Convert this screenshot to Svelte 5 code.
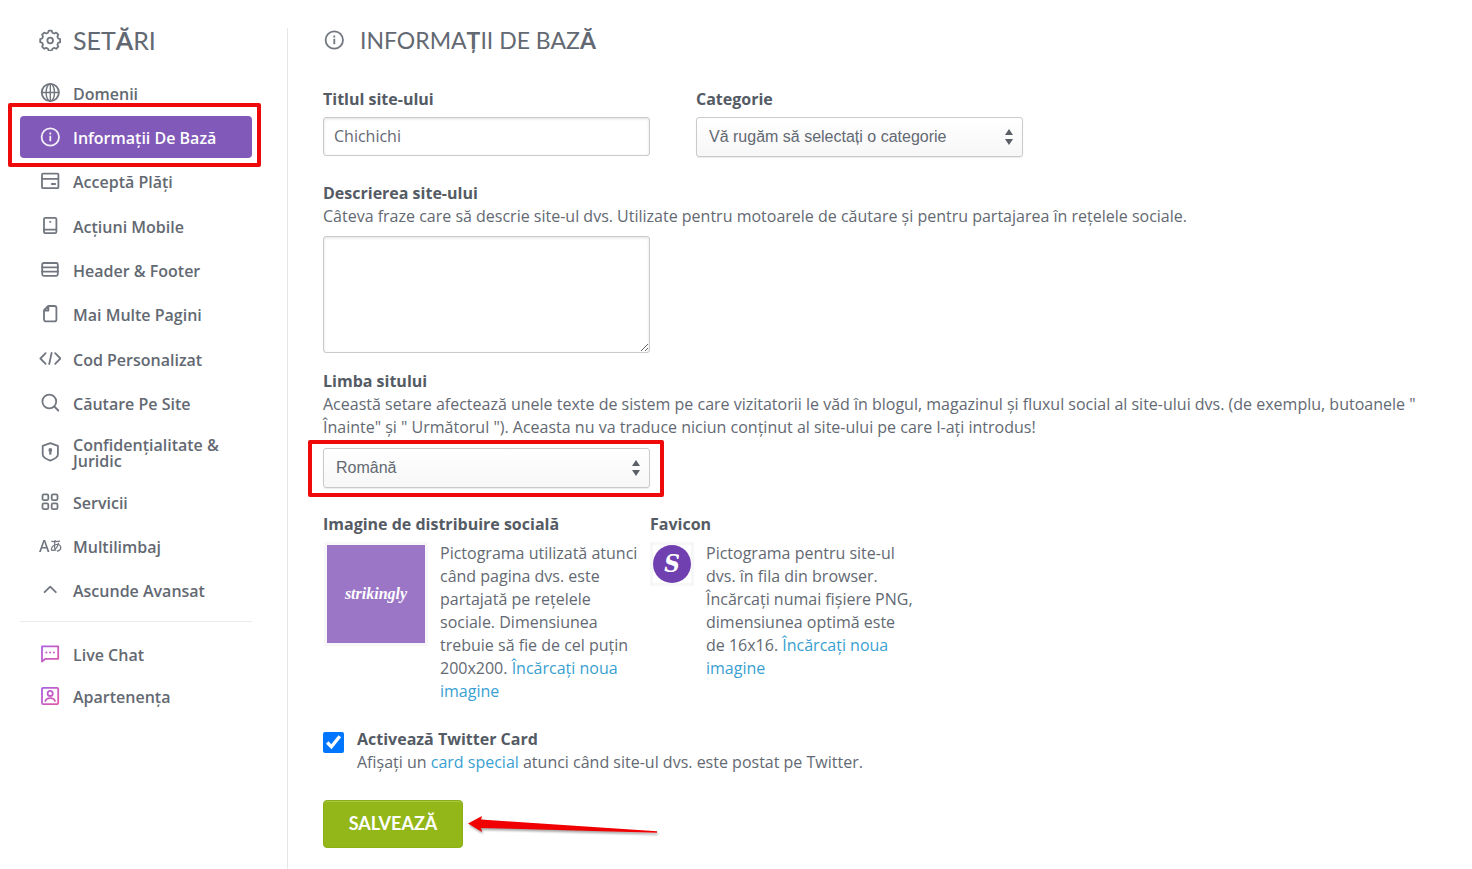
<script lang="ts">
  interface NavItem {
    icon: string;
    label: string;
    active?: boolean;
  }

  const settings: NavItem[] = [
    { icon: "globe", label: "Domenii" },
    { icon: "info", label: "Informații De Bază", active: true },
    { icon: "card", label: "Acceptă Plăți" },
    { icon: "mobile", label: "Acțiuni Mobile" },
    { icon: "rows", label: "Header & Footer" },
    { icon: "page", label: "Mai Multe Pagini" },
    { icon: "code", label: "Cod Personalizat" },
    { icon: "search", label: "Căutare Pe Site" },
    { icon: "shield", label: "Confidențialitate & Juridic" },
    { icon: "grid", label: "Servicii" },
    { icon: "lang", label: "Multilimbaj" },
    { icon: "up", label: "Ascunde Avansat" },
  ];

  const extras: NavItem[] = [
    { icon: "chat", label: "Live Chat" },
    { icon: "member", label: "Apartenența" },
  ];

  let title = $state("Chichichi");
  let description = $state("");
  let twitterCard = $state(true);
</script>

{#snippet icon(name: string)}
  {#if name === "lang"}
    <span class="icon icon--text" aria-hidden="true">A<span class="icon__kana">あ</span></span>
  {:else}
    <svg class="icon" viewBox="0 0 22 22" aria-hidden="true">
      {#if name === "gear"}
        <path d="M9.500 1.900h3l.7 2 1.800.8 2-.9 2.100 2.100-.9 2 .8 1.800 2 .7v3l-2 .7-.8 1.800.9 2-2.100 2.100-2-.9-1.800.8-.7 2h-3l-.7-2-1.800-.8-2 .9-2.100-2.100.9-2-.8-1.800-2-.7v-3l2-.7.8-1.800-.9-2L5 3.800l2 .9 1.800-.8z" transform="translate(.2 -.2)" />
        <circle cx="11.200" cy="11.500" r="2.800" />
      {:else if name === "globe"}
        <circle cx="11.300" cy="10.500" r="8.600" />
        <ellipse cx="11.300" cy="10.500" rx="4.200" ry="8.600" stroke-width="1.400" />
        <path d="M11.300 2v17M2.700 10.500h17.200" stroke-width="1.400" />
      {:else if name === "info"}
        <circle cx="11.300" cy="11" r="8.700" />
        <path d="M11.300 9.800v5.400M11.300 6.400v2" stroke-linecap="butt" />
      {:else if name === "card"}
        <rect x="3" y="3.600" width="16.400" height="14.600" rx="1" />
        <path d="M3.200 8.800h16M12.800 14h3.400" />
      {:else if name === "mobile"}
        <rect x="5" y="2.800" width="12.400" height="15.400" rx="1.500" />
        <path d="M5 14.600h12M11 6.800h.4" />
      {:else if name === "rows"}
        <rect x="3.200" y="4" width="15.600" height="12.800" rx="1.500" />
        <path d="M3 8.300h16M3 12.600h16" />
      {:else if name === "page"}
        <path d="M9.200 3h6.200a2 2 0 0 1 2 2v11.400a2 2 0 0 1-2 2H7a2 2 0 0 1-2-2V7.200zM9.400 3v4.500H5" />
      {:else if name === "code"}
        <path d="M6.600 5.200 1.400 10.500l5.200 5.300M16.200 5.200l5.200 5.300-5.200 5.300M12.600 5l-2.400 11" />
      {:else if name === "search"}
        <circle cx="10.300" cy="9.500" r="6.900" />
        <path d="m15.300 14.500 4 4" />
      {:else if name === "shield"}
        <path d="M11.300 2.200 18.900 4.800v8.800c0 2.400-3.200 4.500-7.600 6-4.400-1.500-7.600-3.600-7.600-6V4.800z" />
        <circle cx="11.300" cy="9" r="1.900" fill="currentColor" stroke="none" />
        <path d="M11.300 9v4.600" stroke-width="2.200" stroke-linecap="butt" />
      {:else if name === "grid"}
        <rect x="3.500" y="3.300" width="5.800" height="5.800" rx="1.400" />
        <rect x="12.700" y="3.300" width="5.800" height="5.800" rx="1.400" />
        <rect x="3.500" y="12.300" width="5.800" height="5.800" rx="1.400" />
        <rect x="12.700" y="12.300" width="5.800" height="5.800" rx="1.400" />
      {:else if name === "up"}
        <path d="m5.600 13.200 5.600-5.600 5.600 5.600" />
      {:else if name === "chat"}
        <path d="M3 3.400h16.200v12.400H6.400L3 18.600z" stroke="url(#pink)" />
        <path d="M7.300 9.500h.1M11.100 9.500h.1M14.900 9.500h.1" stroke="#c04fc4" stroke-width="2" />
      {:else if name === "member"}
        <rect x="3" y="2.900" width="16.200" height="16.200" rx="1" stroke="url(#pink)" />
        <circle cx="11.200" cy="8.400" r="2.600" stroke="url(#pink)" />
        <path d="M6.400 16c1-3.800 8.600-3.800 9.600 0" stroke="url(#pink)" />
      {/if}
    </svg>
  {/if}
{/snippet}

{#snippet arrows()}
  <svg class="select__arrows" viewBox="0 0 8 16" aria-hidden="true">
    <path d="M4 0l4 6H0zM4 16l4-6H0z" />
  </svg>
{/snippet}

{#snippet navItem(item: NavItem)}
  <li class="nav__row">
    <a class="nav__link" class:nav__link--active={item.active} href="#{item.icon}">
      {@render icon(item.icon)}
      <span class="nav__label">{item.label}</span>
    </a>
    {#if item.active}
      <span class="marker marker--nav"></span>
    {/if}
  </li>
{/snippet}

<svg class="defs" aria-hidden="true">
  <linearGradient id="pink" gradientUnits="userSpaceOnUse" x1="2" y1="3" x2="20" y2="19">
    <stop offset="0" stop-color="#a04fe0" />
    <stop offset="1" stop-color="#e0489f" />
  </linearGradient>
</svg>

<div class="page">
  <aside class="sidebar">
    <h2 class="heading heading--side">
      {@render icon("gear")}
      <span>SET<b>Ă</b>RI</span>
    </h2>
    <nav>
      <ul class="nav">
        {#each settings as item (item.icon)}
          {@render navItem(item)}
        {/each}
      </ul>
      <ul class="nav nav--extras">
        {#each extras as item (item.icon)}
          {@render navItem(item)}
        {/each}
      </ul>
    </nav>
  </aside>

  <main class="content">
    <h1 class="heading">
      {@render icon("info")}
      <span>INFORMA<b>Ț</b>II DE BAZ<b>Ă</b></span>
    </h1>

    <form class="form">
      <div class="columns columns--spaced">
        <div class="field">
          <label class="label label--gap" for="title">Titlul site-ului</label>
          <input class="input" id="title" type="text" bind:value={title} />
        </div>
        <div class="field">
          <label class="label label--gap" for="category">Categorie</label>
          <div class="select">
            <select id="category">
              <option>Vă rugăm să selectați o categorie</option>
            </select>
            {@render arrows()}
          </div>
        </div>
      </div>

      <div class="block block--description">
        <label class="label" for="description">Descrierea site-ului</label>
        <p class="text">
          Câteva fraze care să descrie site-ul dvs. Utilizate pentru motoarele de căutare și pentru partajarea în rețelele sociale.
        </p>
        <textarea class="input input--area" id="description" bind:value={description}></textarea>
      </div>

      <div class="block block--language">
        <label class="label" for="language">Limba sitului</label>
        <p class="text">
          Această setare afectează unele texte de sistem pe care vizitatorii le văd în blogul, magazinul și fluxul social al site-ului dvs. (de exemplu, butoanele " Înainte" și " Următorul "). Aceasta nu va traduce niciun conținut al site-ului pe care l-ați introdus!
        </p>
        <div class="select">
          <select id="language">
            <option>Română</option>
          </select>
          {@render arrows()}
          <span class="marker marker--select"></span>
        </div>
      </div>

      <div class="columns block--images">
        <section class="field">
          <h3 class="label label--gap">Imagine de distribuire socială</h3>
          <div class="upload">
            <div class="thumb thumb--share"><span>strikingly</span></div>
            <p class="text">
              Pictograma utilizată atunci când pagina dvs. este partajată pe rețelele sociale. Dimensiunea trebuie să fie de cel puțin 200x200. <a href="#share">Încărcați noua imagine</a>
            </p>
          </div>
        </section>
        <section class="field field--favicon">
          <h3 class="label label--gap">Favicon</h3>
          <div class="upload">
            <div class="thumb thumb--favicon"><span>S</span></div>
            <p class="text">
              Pictograma pentru site-ul dvs. în fila din browser. Încărcați numai fișiere PNG, dimensiunea optimă este de 16x16. <a href="#favicon">Încărcați noua imagine</a>
            </p>
          </div>
        </section>
      </div>

      <div class="check">
        <input class="check__box" id="twitter" type="checkbox" bind:checked={twitterCard} />
        <div>
          <label class="label" for="twitter">Activează Twitter Card</label>
          <p class="text">
            Afișați un <a href="#card">card special</a> atunci când site-ul dvs. este postat pe Twitter.
          </p>
        </div>
      </div>

      <div class="actions">
        <button class="save" type="button">SALVEAZĂ</button>
        <svg class="pointer" viewBox="0 0 190 20" aria-hidden="true">
          <path d="M0 9.500 14 2l-1 3.500L189 17.200v1.600L13 14l1 4z" />
        </svg>
      </div>
    </form>
  </main>
</div>

<style>
  :global(body) {
    margin: 0;
    background: #fff;
    color: #636972;
    font: 16px/23px "Open Sans", sans-serif;
  }

  .defs {
    position: absolute;
    width: 0;
    height: 0;
  }

  .page {
    display: flex;
    min-height: 100vh;
    box-sizing: border-box;
    padding-top: 28px;
  }

  .sidebar {
    flex: none;
    box-sizing: border-box;
    width: 288px;
    padding: 0 35px 0 20px;
    border-right: 1px solid #e5e6e8;
  }

  .content {
    flex: 1;
    min-width: 0;
    padding: 0 24px 21px 35px;
  }

  .heading {
    display: flex;
    align-items: center;
    gap: 15px;
    margin: 0 0 36px;
    color: #636972;
    font: 400 23px/24px Lato, sans-serif;
  }

  .heading--side {
    gap: 12px;
    margin-bottom: 20px;
    padding-left: 19px;
    font-size: 25px;
  }

  .icon {
    flex: none;
    width: 22px;
    height: 22px;
    fill: none;
    stroke: currentColor;
    stroke-width: 1.8;
    stroke-linecap: round;
    stroke-linejoin: round;
    opacity: 0.9;
  }

  .icon--text {
    display: flex;
    align-items: center;
    font: 500 16px/22px "Noto Sans", sans-serif;
  }

  .icon__kana {
    align-self: flex-start;
    font: 500 13px/20px "Noto Sans CJK JP", sans-serif;
  }

  .nav {
    margin: 0;
    padding: 0;
    list-style: none;
  }

  .nav--extras {
    margin-top: 10px;
    padding-top: 11px;
    border-top: 1px solid #e9eaec;
  }

  .nav__row {
    position: relative;
    margin-bottom: 2px;
  }

  .nav__row:nth-child(3n) {
    margin-bottom: 3px;
  }

  .nav--extras .nav__row {
    margin-bottom: 0;
  }

  .nav__link {
    display: flex;
    align-items: center;
    gap: 12px;
    box-sizing: border-box;
    min-height: 42px;
    padding: 9px 19px;
    border-radius: 4px;
    color: #636972;
    font-weight: 600;
    line-height: 16px;
    text-decoration: none;
  }

  .nav__link--active {
    background: #8159b8;
    color: #fff;
  }

  .nav__label {
    padding-top: 2px;
  }

  .marker {
    position: absolute;
    border: 4px solid #ee0a0a;
    border-radius: 2px;
    pointer-events: none;
  }

  .marker--nav {
    inset: -13px -9px -9px -12px;
  }

  .marker--select {
    inset: -8px -14px -9px -15px;
  }

  .columns {
    display: flex;
  }

  .columns--spaced {
    gap: 46px;
  }

  .field {
    box-sizing: border-box;
    width: 327px;
  }

  .label {
    display: block;
    margin: 0;
    color: #545b64;
    font-size: 16px;
    font-weight: 700;
    line-height: 23px;
  }

  .label--gap {
    margin-bottom: 6px;
  }

  .text {
    margin: 0;
  }

  a {
    color: #3a9fd1;
    text-decoration: none;
  }

  .input {
    display: block;
    box-sizing: border-box;
    width: 327px;
    height: 39px;
    padding: 0 10px 2px;
    border: 1px solid #c8cacc;
    border-radius: 3px;
    box-shadow: inset 0 1px 3px rgba(0, 0, 0, 0.12);
    background: #fff;
    color: #636972;
    font: 16px/23px "Open Sans", sans-serif;
  }

  .input--area {
    height: 117px;
    margin-top: 8px;
    padding: 8px 10px;
  }

  .select {
    position: relative;
    width: 327px;
  }

  .select select {
    display: block;
    appearance: none;
    box-sizing: border-box;
    width: 100%;
    height: 40px;
    padding: 0 32px 2px 12px;
    border: 1px solid #c8cacc;
    border-radius: 3px;
    box-shadow: 0 1px 1px rgba(0, 0, 0, 0.08);
    background: linear-gradient(#fff, #f7f7f7);
    color: #636972;
    font: 16px/23px "Liberation Sans", sans-serif;
  }

  .select__arrows {
    position: absolute;
    top: 12px;
    right: 10px;
    width: 8px;
    height: 16px;
    fill: #5b6068;
    pointer-events: none;
  }

  .block--description {
    margin-top: 25px;
  }

  .block--language {
    margin-top: 17px;
  }

  .block--language .select {
    margin-top: 9px;
  }

  .block--images {
    margin-top: 25px;
  }

  .block--images .field {
    padding-right: 8px;
  }

  .block--images .field--favicon {
    width: 272px;
  }

  .upload {
    display: flex;
    align-items: flex-start;
    gap: 12px;
  }

  .thumb {
    display: flex;
    flex: none;
    align-items: center;
    justify-content: center;
    border: 3px solid #f7f7f9;
    color: #fff;
    font: italic 700 16px/20px "Liberation Serif", serif;
  }

  .thumb--share {
    width: 98px;
    height: 98px;
    margin-left: 1px;
    background: #9b76c6;
  }

  .thumb--favicon {
    width: 38px;
    height: 38px;
  }

  .thumb--favicon span {
    width: 38px;
    border-radius: 50%;
    background: #7140b0;
    font-family: "DejaVu Serif Condensed", "DejaVu Serif", serif;
    font-size: 24px;
    line-height: 38px;
    text-align: center;
  }

  .check {
    display: flex;
    align-items: flex-start;
    gap: 13px;
    margin-top: 25px;
  }

  .check__box {
    width: 21px;
    height: 21px;
    margin: 4px 0 0;
    accent-color: #0075ff;
  }

  .actions {
    display: flex;
    align-items: center;
    gap: 5px;
    margin-top: 26px;
  }

  .save {
    width: 140px;
    height: 48px;
    padding: 0 0 2px;
    border: 1px solid #8cb014;
    border-radius: 4px;
    box-shadow: inset 0 1px 0 #a9c84a;
    background: #93b719;
    color: #fff;
    font: 700 18px/24px Lato, sans-serif;
  }

  .pointer {
    width: 190px;
    height: 20px;
    fill: #f00000;
    filter: drop-shadow(1px 2px 1px rgba(0, 0, 0, 0.35));
  }
</style>
